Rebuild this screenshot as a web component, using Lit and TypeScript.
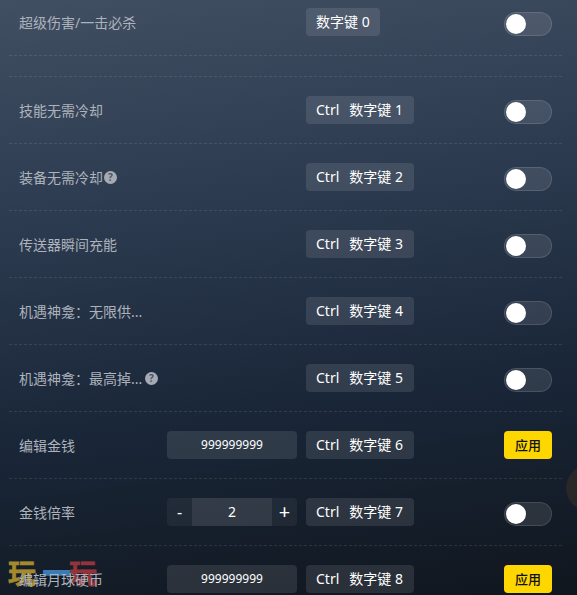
import { LitElement, html, css } from 'lit';
import { customElement } from 'lit/decorators.js';

type Row = {
  label: string;
  keys: string[];
  help?: boolean;
  cut?: boolean;
  input?: string;
  stepper?: string;
  apply?: boolean;
};

const rows: Row[] = [
  { label: '技能无需冷却', keys: ['Ctrl', '数字键 1'] },
  { label: '装备无需冷却', keys: ['Ctrl', '数字键 2'], help: true },
  { label: '传送器瞬间充能', keys: ['Ctrl', '数字键 3'] },
  { label: '机遇神龛：无限供...', keys: ['Ctrl', '数字键 4'], cut: true },
  { label: '机遇神龛：最高掉...', keys: ['Ctrl', '数字键 5'], help: true, cut: true },
  { label: '编辑金钱', keys: ['Ctrl', '数字键 6'], input: '999999999', apply: true },
  { label: '金钱倍率', keys: ['Ctrl', '数字键 7'], stepper: '2' },
  { label: '编辑月球硬币', keys: ['Ctrl', '数字键 8'], input: '999999999', apply: true },
];

@customElement('app-root')
export class AppRoot extends LitElement {
  static styles = css`
    :host {
      display: block;
      position: relative;
      height: 595px;
      overflow: hidden;
      background: linear-gradient(172deg, #414f63 0%, #2c3a4f 35%, #1a2739 65%, #10161e 100%);
      font-family: 'Noto Sans', 'Noto Sans CJK SC', sans-serif;
      font-size: 14px;
    }
    .list {
      position: relative;
      z-index: 1;
      padding: 0 15px 0 9px;
    }
    .row {
      display: flex;
      box-sizing: border-box;
      height: 67px;
      padding: 19px 10px;
      border-bottom: 1px dashed rgba(255, 255, 255, 0.1);
    }
    .row.first {
      height: 56px;
      padding-top: 8px;
    }
    .spacer {
      box-sizing: border-box;
      height: 21px;
      border-bottom: 1px dashed rgba(255, 255, 255, 0.1);
    }
    .label {
      box-sizing: border-box;
      width: 148px;
      height: 28px;
      padding-top: 1px;
      line-height: 28px;
      color: #adb3bc;
      white-space: nowrap;
      display: flex;
      align-items: center;
    }
    .cut {
      width: 125px;
    }
    .help {
      width: 13px;
      height: 13px;
      margin-left: 1px;
      border-radius: 50%;
      background: #a6abb3;
      color: #4a5667;
      font-size: 10px;
      font-weight: 700;
      line-height: 13px;
      text-align: center;
    }
    .control {
      width: 139px;
      flex: none;
    }
    .input {
      width: 130px;
      height: 28px;
      line-height: 28px;
      border-radius: 4px;
      background: rgba(255, 255, 255, 0.1);
      color: #fff;
      font-size: 12px;
      text-align: center;
    }
    .stepper {
      display: flex;
      width: 130px;
      height: 28px;
      line-height: 28px;
      border-radius: 4px;
      overflow: hidden;
      background: rgba(255, 255, 255, 0.05);
      color: #fff;
      text-align: center;
    }
    .stepper span {
      width: 25px;
      font-size: 16px;
    }
    .stepper .plus {
      font-size: 20px;
    }
    .stepper .value {
      flex: 1;
      font-size: 14px;
      line-height: 27px;
      background: rgba(255, 255, 255, 0.08);
    }
    .keys {
      display: flex;
      gap: 10px;
      height: 28px;
      line-height: 27px;
      padding: 0 10px;
      border-radius: 4px;
      background: rgba(255, 255, 255, 0.1);
      color: #fff;
      white-space: nowrap;
    }
    .keys span + span {
      margin-right: 1px;
    }
    .end {
      margin-left: auto;
      display: flex;
      align-items: flex-end;
    }
    .toggle {
      box-sizing: border-box;
      width: 48px;
      height: 24px;
      padding: 2px;
      border-radius: 12px;
      border: 1px solid rgba(255, 255, 255, 0.12);
      background: rgba(255, 255, 255, 0.1);
    }
    .knob {
      width: 20px;
      height: 20px;
      margin: -1px;
      border-radius: 50%;
      background: #fff;
    }
    .apply {
      width: 48px;
      height: 28px;
      line-height: 28px;
      border-radius: 4px;
      background: #ffd700;
      color: #111;
      font-size: 13px;
      font-weight: 500;
      text-align: center;
    }
    .mark {
      position: absolute;
      left: 8px;
      top: 555px;
      display: flex;
      font-family: 'Noto Sans CJK SC', serif;
      font-size: 28px;
      line-height: 34px;
      font-weight: 700;
      -webkit-text-stroke: 0.6px currentColor;
    }
    .gold { color: #a58a2c; }
    .blue { color: #3d7ab0; margin-left: 7px; width: 26px; -webkit-text-stroke-width: 2px; }
    .red { color: #93343a; }
    .float {
      position: absolute;
      left: 566px;
      top: 465px;
      width: 46px;
      height: 46px;
      border-radius: 50%;
      background: rgba(60, 50, 40, 0.5);
    }
  `;

  private renderRow(r: Row) {
    return html`
      <div class="row">
        <div class="label">
          <span class=${r.cut ? 'cut' : ''}>${r.label}</span>
          ${r.help ? html`<span class="help">?</span>` : ''}
        </div>
        <div class="control">
          ${r.input ? html`<div class="input">${r.input}</div>` : ''}
          ${r.stepper
            ? html`<div class="stepper"><span>-</span><span class="value">${r.stepper}</span><span class="plus">+</span></div>`
            : ''}
        </div>
        <div class="keys">${r.keys.map((k) => html`<span>${k}</span>`)}</div>
        <div class="end">
          ${r.apply
            ? html`<div class="apply">应用</div>`
            : html`<div class="toggle"><div class="knob"></div></div>`}
        </div>
      </div>
    `;
  }

  render() {
    return html`
      <div class="mark"><span class="gold">玩</span><span class="blue">一</span><span class="red">玩</span></div>
      <div class="list">
        <div class="row first">
          <div class="label">超级伤害/一击必杀</div>
          <div class="control"></div>
          <div class="keys"><span>数字键 0</span></div>
          <div class="end"><div class="toggle"><div class="knob"></div></div></div>
        </div>
        <div class="spacer"></div>
        ${rows.map((r) => this.renderRow(r))}
      </div>
      <div class="float"></div>
    `;
  }
}
